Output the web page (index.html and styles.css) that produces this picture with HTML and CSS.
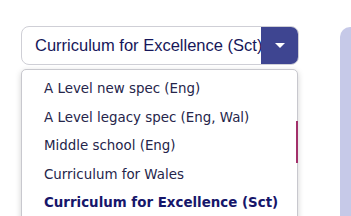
FILE: index.html
```html
<!DOCTYPE html>
<html>
<head>
<meta charset="utf-8">
<link rel="stylesheet" href="styles.css">
</head>
<body>
<div class="page">
  <div class="picker">
    <div class="select">
      <span class="select-text">Curriculum for Excellence (Sct)</span>
      <span class="select-btn"><span class="caret"></span></span>
    </div>
    <ul class="menu">
      <li class="item">A Level new spec (Eng)</li>
      <li class="item">A Level legacy spec (Eng, Wal)</li>
      <li class="item">Middle school (Eng)</li>
      <li class="item">Curriculum for Wales</li>
      <li class="item selected">Curriculum for Excellence (Sct)</li>
      <span class="thumb"></span>
    </ul>
  </div>
  <div class="panel"></div>
</div>
</body>
</html>
```
FILE: styles.css
```css
html, body {
  margin: 0;
  padding: 0;
  background: #ffffff;
  overflow: hidden;
}
.page {
  display: flex;
  gap: 41px;
  padding: 26px 0 0 21px;
  height: 216px;
  box-sizing: border-box;
  overflow: hidden;
}
.picker {
  width: 278px;
  flex: none;
  display: flex;
  flex-direction: column;
  gap: 4px;
}
.select {
  position: relative;
  flex: none;
  height: 39px;
  box-sizing: border-box;
  display: flex;
  border: 1px solid #cfcfd6;
  border-radius: 8px;
  overflow: hidden;
}
.select-text {
  flex: none;
  display: flex;
  align-items: center;
  padding-left: 13px;
  font-family: "Liberation Sans", Arial, sans-serif;
  font-size: 16.5px;
  color: #17175a;
  white-space: nowrap;
}
.select-btn {
  position: absolute;
  top: -1px;
  bottom: -1px;
  right: -1px;
  width: 38px;
  background: #3e4591;
  display: flex;
  align-items: center;
  justify-content: center;
}
.caret {
  width: 0;
  height: 0;
  border-left: 5px solid transparent;
  border-right: 5px solid transparent;
  border-top: 5px solid #ffffff;
}
.menu {
  position: relative;
  list-style: none;
  margin: 0;
  padding: 5px 0 0 0;
  width: 277px;
  height: 160px;
  flex: none;
  box-sizing: border-box;
  border: 1px solid #c8c8ce;
  border-radius: 5px;
  box-shadow: 0 2px 6px rgba(0, 0, 0, 0.18);
  background: #ffffff;
}
.item {
  height: 28.5px;
  line-height: 28.5px;
  padding-left: 22px;
  font-family: "DejaVu Sans", Verdana, sans-serif;
  font-size: 13.4px;
  color: #25254a;
  white-space: nowrap;
}
.item.selected {
  font-weight: bold;
  color: #16166a;
}
.thumb {
  position: absolute;
  right: -1px;
  top: 51px;
  width: 2px;
  height: 42px;
  background: #a2306a;
}
.panel {
  flex: 1;
  margin-top: 1px;
  background: #c6c9e8;
  border-top-left-radius: 10px;
}
```
